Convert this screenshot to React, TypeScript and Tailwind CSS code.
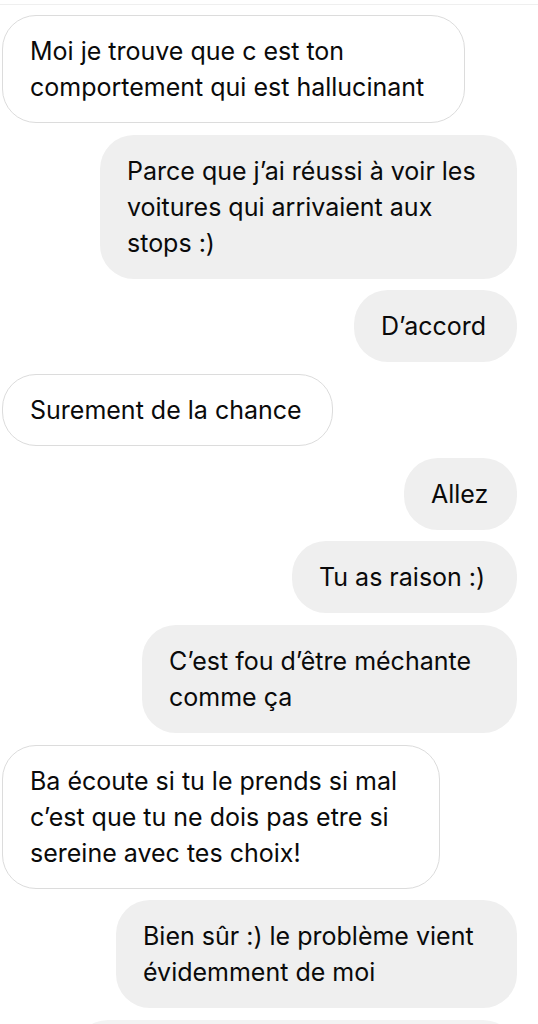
import React from "react";

type Msg = { side: "l" | "r"; w: string; lines: string[] };

const msgs: Msg[] = [
  { side: "l", w: "w-[463px]", lines: ["Moi je trouve que c est ton", "comportement qui est hallucinant"] },
  { side: "r", w: "w-[417px]", lines: ["Parce que j’ai réussi à voir les", "voitures qui arrivaient aux", "stops :)"] },
  { side: "r", w: "w-[163px]", lines: ["D’accord"] },
  { side: "l", w: "w-[331px]", lines: ["Surement de la chance"] },
  { side: "r", w: "w-[113px]", lines: ["Allez"] },
  { side: "r", w: "w-[225px]", lines: ["Tu as raison :)"] },
  { side: "r", w: "w-[375px]", lines: ["C’est fou d’être méchante", "comme ça"] },
  { side: "l", w: "w-[438px]", lines: ["Ba écoute si tu le prends si mal", "c’est que tu ne dois pas etre si", "sereine avec tes choix!"] },
  { side: "r", w: "w-[401px]", lines: ["Bien sûr :) le problème vient", "évidemment de moi"] },
];

function Bubble({ m }: { m: Msg }) {
  const base =
    "rounded-[34px] pl-[27px] pr-[20px] text-[25px] leading-[36px] text-[#0a0a0a] whitespace-nowrap overflow-hidden";
  if (m.side === "l") {
    return (
      <div className="flex justify-start pl-[2px]">
        <div className={`${base} ${m.w} border border-[#dcdcdc] bg-white py-[17px]`}>
          {m.lines.map((t, i) => (
            <div key={i}>{t}</div>
          ))}
        </div>
      </div>
    );
  }
  return (
    <div className="flex justify-end pr-[21px]">
      <div className={`${base} ${m.w} bg-[#efefef] py-[18px]`}>
        {m.lines.map((t, i) => (
          <div key={i}>{t}</div>
        ))}
      </div>
    </div>
  );
}

export default function App() {
  return (
    <div
      className="w-[538px] h-[1024px] overflow-hidden bg-white"
      style={{ fontFamily: "Inter, 'Liberation Sans', sans-serif" }}
    >
      <div className="h-[4px]" />
      <div className="h-px bg-[#efefef]" />
      <div className="flex flex-col gap-[11.67px] pt-[10px]">
        {msgs.map((m, i) => (
          <Bubble key={i} m={m} />
        ))}
        <div className="flex justify-end pr-[21px]">
          <div className="w-[443px] h-[72px] rounded-[34px] bg-[#f3f3f3]" />
        </div>
      </div>
    </div>
  );
}
